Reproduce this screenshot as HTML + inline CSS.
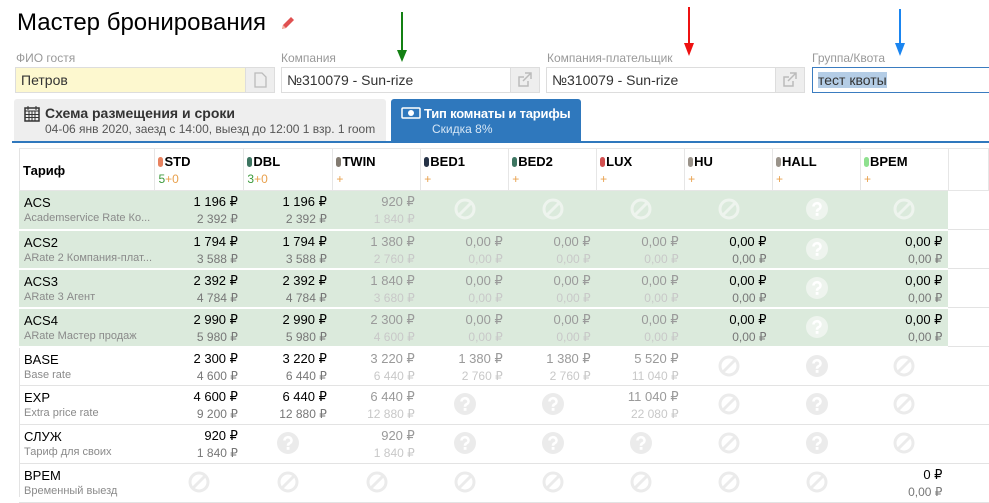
<!DOCTYPE html>
<html><head><meta charset="utf-8">
<style>
*{box-sizing:border-box;margin:0;padding:0}
body{width:989px;height:497px;overflow:hidden;background:#fff;font-family:"Liberation Sans","DejaVu Sans",sans-serif;color:#000;position:relative}
.abs{position:absolute}
h1{position:absolute;left:17px;top:9px;font-size:24px;font-weight:normal;letter-spacing:0}
.lbl{position:absolute;top:51px;font-size:12px;color:#999}
.inp{position:absolute;top:67px;height:26px;border:1px solid #ddd;font-size:14px;padding:4px 5px;color:#333}
.btn{position:absolute;top:67px;height:26px;width:30px;background:#eee;border:1px solid #ddd}
table{position:absolute;left:19px;top:148px;border-collapse:collapse;table-layout:fixed}
td{vertical-align:top;padding:0}
.hd td{height:42px;border-right:1px solid #e6e6e6;border-top:1px solid #e6e6e6;border-bottom:1px solid #e6e6e6;padding:5px 0 0 3px;font-size:13px;font-weight:bold}
.hd .sub{font-weight:normal;font-size:12px;color:#e8a04c;margin-top:3px}
.dot{display:inline-block;width:5px;height:10px;border-radius:3px;margin-right:1px;vertical-align:-1px}
tr.r td{height:39px;border-bottom:1px solid #e3e3e3}
tr.g td{background:#dbeadc;border-bottom:2px solid #fff}
tr.g td.last{background:#fff;border-bottom:1px solid #e3e3e3}
td.n{padding:4px 0 0 5px}
td.n .a{font-size:13px}
td.n .b{font-size:11px;color:#8a8a8a;margin-top:2px;white-space:nowrap;overflow:hidden}
td.v{text-align:right;padding:3px 6px 0 0}
td.v .a{font-size:13px}
td.v .b{font-size:12px;margin-top:2px}
.d .a{color:#000}.d .b{color:#777}
.l .a{color:#9a9a9a}.l .b{color:#c8c8c8}
td.i{text-align:center;padding-top:7px}
</style></head><body>
<h1>Мастер бронирования</h1>
<svg class="abs" style="left:280px;top:15px" width="16" height="16" viewBox="0 0 16 16"><path d="M2 14l1-4 8-8 3 3-8 8z" fill="#e05050"/><path d="M2 14l1-4 3 3z" fill="#f3b0a0"/></svg>

<div class="lbl" style="left:16px">ФИО гостя</div>
<div class="inp" style="left:15px;width:231px;background:#fdf8cf">Петров</div>
<div class="btn" style="left:245px"><svg width="28" height="24" viewBox="0 0 28 24"><path d="M9 5h7l4 4v10H9z" fill="none" stroke="#bbb" stroke-width="1.3"/></svg></div>

<div class="lbl" style="left:281px">Компания</div>
<div class="inp" style="left:281px;width:230px">№310079 - Sun-rize</div>
<div class="btn" style="left:510px"><svg width="28" height="24" viewBox="0 0 28 24"><path d="M17 13v5H8V9h5M14 5h6v6M20 5l-8 8" fill="none" stroke="#bbb" stroke-width="1.5"/></svg></div>

<div class="lbl" style="left:547px">Компания-плательщик</div>
<div class="inp" style="left:546px;width:230px">№310079 - Sun-rize</div>
<div class="btn" style="left:775px"><svg width="28" height="24" viewBox="0 0 28 24"><path d="M17 13v5H8V9h5M14 5h6v6M20 5l-8 8" fill="none" stroke="#bbb" stroke-width="1.5"/></svg></div>

<div class="lbl" style="left:812px">Группа/Квота</div>
<div class="inp" style="left:812px;width:180px;border-color:#3a7cc0"><span style="background:#b4cde6;color:#333">тест квоты</span></div>

<svg class="abs" style="left:396px;top:12px" width="12" height="52"><line x1="6" y1="0" x2="6" y2="40" stroke="#138013" stroke-width="2"/><path d="M1 38h10l-5 12z" fill="#138013"/></svg>
<svg class="abs" style="left:683px;top:7px" width="12" height="52"><line x1="6" y1="0" x2="6" y2="38" stroke="#ee1111" stroke-width="2"/><path d="M1 36h10l-5 13z" fill="#ee1111"/></svg>
<svg class="abs" style="left:894px;top:9px" width="12" height="50"><line x1="6" y1="0" x2="6" y2="36" stroke="#1a85f0" stroke-width="2"/><path d="M1 34h10l-5 13z" fill="#1a85f0"/></svg>

<div class="abs" style="left:14px;top:99px;width:372px;height:42px;background:#eee;border-radius:3px 3px 0 0"></div>
<svg class="abs" style="left:24px;top:105px" width="16" height="17" viewBox="0 0 16 17"><rect x="1" y="3" width="14" height="13" fill="none" stroke="#333" stroke-width="1.5"/><path d="M1 6h14M4 1v4M12 1v4M1 9.5h14M1 12.5h14M5 6v10M8 6v10M11 6v10" stroke="#333" stroke-width="1"/></svg>
<div class="abs" style="left:45px;top:105px;font-size:14px;font-weight:bold;color:#333">Схема размещения и сроки</div>
<div class="abs" style="left:45px;top:122px;font-size:12px;color:#555">04-06 янв 2020, заезд с 14:00, выезд до 12:00 1 взр. 1 room</div>
<div class="abs" style="left:391px;top:99px;width:190px;height:43px;background:#2f78bd;border-radius:3px 3px 0 0"></div>
<svg class="abs" style="left:401px;top:107px" width="20" height="12"><rect x="1" y="1" width="18" height="10" rx="1" fill="none" stroke="#fff" stroke-width="1.5"/><circle cx="10" cy="6" r="3" fill="#fff"/></svg>
<div class="abs" style="left:424px;top:106px;font-size:13px;font-weight:bold;color:#fff;letter-spacing:-0.2px">Тип комнаты и тарифы</div>
<div class="abs" style="left:432px;top:122px;font-size:12px;color:#d6e6f5">Скидка 8%</div>
<div class="abs" style="left:12px;top:141px;width:977px;height:2px;background:#2f78bd"></div>
<div class="abs" style="left:19px;top:148px;width:1px;height:349px;background:#e3e3e3"></div>

<svg width="0" height="0" style="position:absolute"><defs>
<g id="ban"><circle cx="11" cy="11" r="9" fill="none" stroke="currentColor" stroke-width="3"/><line x1="5" y1="17" x2="17" y2="5" stroke="currentColor" stroke-width="3"/></g>
<g id="q"><circle cx="11" cy="11" r="11" fill="currentColor"/><path d="M7.5 8.5a3.5 3.2 0 1 1 5 2.8c-1.3.7-1.5 1.2-1.5 2.5" fill="none" stroke="#fff" stroke-width="2.6"/><rect x="9.7" y="15" width="2.8" height="2.8" fill="#fff"/></g>
</defs></svg>

<table id="t">
<colgroup><col style="width:136px"><col style="width:89px"><col style="width:89px"><col style="width:88px"><col style="width:88px"><col style="width:88px"><col style="width:88px"><col style="width:88px"><col style="width:88px"><col style="width:88px"><col style="width:40px"></colgroup>
<tr class="hd">
<td style="padding:14px 0 0 4px">Тариф</td>
<td><span class="dot" style="background:#e8825f"></span>STD<div class="sub"><span style="color:#3c9a3c">5</span>+0</div></td>
<td><span class="dot" style="background:#3d7561"></span>DBL<div class="sub"><span style="color:#3c9a3c">3</span>+0</div></td>
<td><span class="dot" style="background:#827a70"></span>TWIN<div class="sub">+</div></td>
<td><span class="dot" style="background:#263246"></span>BED1<div class="sub">+</div></td>
<td><span class="dot" style="background:#3d7561"></span>BED2<div class="sub">+</div></td>
<td><span class="dot" style="background:#d25050"></span>LUX<div class="sub">+</div></td>
<td><span class="dot" style="background:#9a938a"></span>HU<div class="sub">+</div></td>
<td><span class="dot" style="background:#9a938a"></span>HALL<div class="sub">+</div></td>
<td><span class="dot" style="background:#8ee08e"></span>ВРЕМ<div class="sub">+</div></td>
<td></td>
</tr>
</table>
<script>
var B='ban',Q='q';
function D(a,b){return ['d',a,b]}function L(a,b){return ['l',a,b]}
var z='0,00 ₽';
var rows=[
['ACS','Academservice Rate Ко...',1,[D('1 196 ₽','2 392 ₽'),D('1 196 ₽','2 392 ₽'),L('920 ₽','1 840 ₽'),B,B,B,B,Q,B]],
['ACS2','ARate 2 Компания-плат...',1,[D('1 794 ₽','3 588 ₽'),D('1 794 ₽','3 588 ₽'),L('1 380 ₽','2 760 ₽'),L(z,z),L(z,z),L(z,z),D(z,z),Q,D(z,z)]],
['ACS3','ARate 3 Агент',1,[D('2 392 ₽','4 784 ₽'),D('2 392 ₽','4 784 ₽'),L('1 840 ₽','3 680 ₽'),L(z,z),L(z,z),L(z,z),D(z,z),Q,D(z,z)]],
['ACS4','ARate Мастер продаж',1,[D('2 990 ₽','5 980 ₽'),D('2 990 ₽','5 980 ₽'),L('2 300 ₽','4 600 ₽'),L(z,z),L(z,z),L(z,z),D(z,z),Q,D(z,z)]],
['BASE','Base rate',0,[D('2 300 ₽','4 600 ₽'),D('3 220 ₽','6 440 ₽'),L('3 220 ₽','6 440 ₽'),L('1 380 ₽','2 760 ₽'),L('1 380 ₽','2 760 ₽'),L('5 520 ₽','11 040 ₽'),B,Q,B]],
['EXP','Extra price rate',0,[D('4 600 ₽','9 200 ₽'),D('6 440 ₽','12 880 ₽'),L('6 440 ₽','12 880 ₽'),Q,Q,L('11 040 ₽','22 080 ₽'),B,Q,B]],
['СЛУЖ','Тариф для своих',0,[D('920 ₽','1 840 ₽'),Q,L('920 ₽','1 840 ₽'),Q,Q,Q,B,Q,B]],
['ВРЕМ','Временный выезд',0,[B,B,B,B,B,B,B,B,D('0 ₽','0,00 ₽')]]
];
var h='';
rows.forEach(function(r){
 h+='<tr class="r'+(r[2]?' g':'')+'"><td class="n"><div class="a">'+r[0]+'</div><div class="b">'+r[1]+'</div></td>';
 r[3].forEach(function(c){
  if(c===B||c===Q){var col=r[2]?'#eef4ee':'#ebebeb';h+='<td class="i"><svg width="22" height="22" style="color:'+col+'"><use href="#'+c+'"/></svg></td>';}
  else h+='<td class="v '+c[0]+'"><div class="a">'+c[1]+'</div><div class="b">'+c[2]+'</div></td>';
 });
 h+='<td class="last"></td></tr>';
});
document.getElementById('t').insertAdjacentHTML('beforeend',h);
</script>
</body></html>
